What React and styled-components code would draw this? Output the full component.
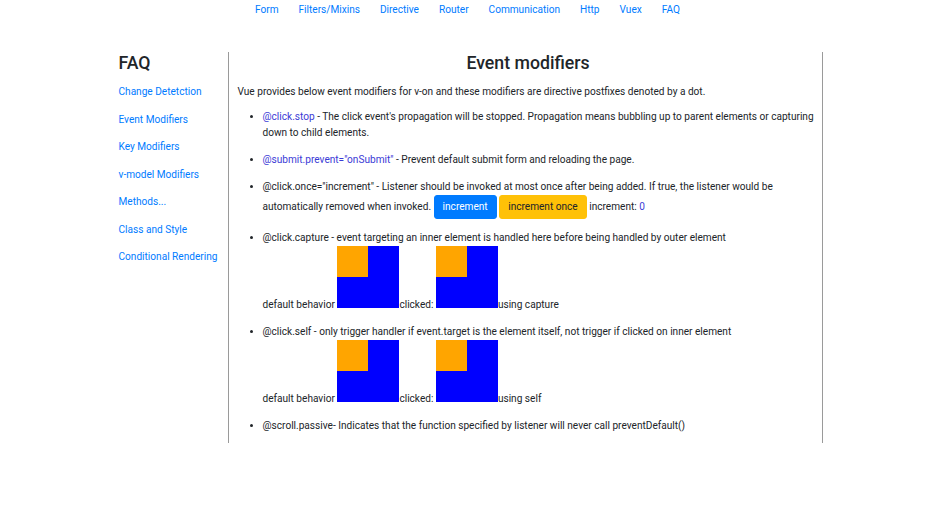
import styled, { createGlobalStyle } from "styled-components";

const TEXT_COLOR = "#212529";
const LINK_COLOR = "#007bff";
const CODE_COLOR = "#3b3bd6";
const RULE_COLOR = "#9a9a9a";

const GlobalStyle = createGlobalStyle`
  body {
    margin: 0;
    background: #fff;
    color: ${TEXT_COLOR};
    font-family: Roboto, "Noto Sans", sans-serif;
    font-size: 10.1px;
    line-height: 16px;
  }
`;

const TopNav = styled.nav`
  display: flex;
  justify-content: center;
  padding: 2px 0 0;
  height: 52px;
  box-sizing: border-box;
`;
const NavLink = styled.a`
  color: ${LINK_COLOR};
  text-decoration: none;
  padding: 0 10px;
`;

const Container = styled.div`
  width: 710px;
  margin: 0 auto;
  padding-left: 6px;
  box-sizing: border-box;
  display: flex;
  align-items: stretch;
`;

const Sidebar = styled.aside`
  width: 109px;
  flex-shrink: 0;
  border-right: 1px solid ${RULE_COLOR};
`;
const Heading = styled.h3`
  font-size: 17.7px;
  font-weight: 500;
  line-height: 22px;
  margin: 0 0 10px;
  text-align: ${(p) => (p.$center ? "center" : "left")};
`;
const SideLink = styled.a`
  display: block;
  color: ${LINK_COLOR};
  text-decoration: none;
  margin-bottom: 11.5px;
`;

const Main = styled.main`
  flex: 1;
  border-right: 1px solid ${RULE_COLOR};
  padding: 0 3px 9px 9px;
`;
const Intro = styled.p`
  margin: 0 0 9px;
`;
const List = styled.ul`
  margin: 0;
  padding-left: 25px;
`;
const Item = styled.li`
  margin-bottom: 11px;

  &:last-child {
    margin-bottom: 0;
  }
`;
const Code = styled.span`
  color: ${CODE_COLOR};
`;
const Button = styled.button`
  font: inherit;
  line-height: 16px;
  border: 1px solid ${(p) => (p.$warning ? "#ffc107" : "#007bff")};
  background: ${(p) => (p.$warning ? "#ffc107" : "#007bff")};
  color: ${(p) => (p.$warning ? TEXT_COLOR : "#fff")};
  padding: 3px 8px;
  border-radius: 3px;
  margin: 0;
  vertical-align: middle;
`;
const Outer = styled.span`
  display: inline-block;
  width: 62px;
  height: 62px;
  background: #0000ff;
  vertical-align: baseline;
`;
const Inner = styled.span`
  display: block;
  width: 31px;
  height: 31px;
  background: #ffa500;
`;

const Boxes = () => (
  <Outer>
    <Inner />
  </Outer>
);

const navItems = ["Form", "Filters/Mixins", "Directive", "Router", "Communication", "Http", "Vuex", "FAQ"];
const sideItems = [
  "Change Detetction",
  "Event Modifiers",
  "Key Modifiers",
  "v-model Modifiers",
  "Methods...",
  "Class and Style",
  "Conditional Rendering",
];

export default function App() {
  return (
    <>
      <GlobalStyle />
      <TopNav>
        {navItems.map((n) => (
          <NavLink key={n} href="#">{n}</NavLink>
        ))}
      </TopNav>
      <Container>
        <Sidebar>
          <Heading>FAQ</Heading>
          {sideItems.map((s) => (
            <SideLink key={s} href="#">{s}</SideLink>
          ))}
        </Sidebar>
        <Main>
          <Heading $center>Event modifiers</Heading>
          <Intro>
            Vue provides below event modifiers for v-on and these modifiers are directive postfixes denoted by a dot.
          </Intro>
          <List>
            <Item>
              <Code>@click.stop</Code> - The click event's propagation will be stopped. Propagation means bubbling up to
              parent elements or capturing down to child elements.
            </Item>
            <Item>
              <Code>@submit.prevent="onSubmit"</Code> - Prevent default submit form and reloading the page.
            </Item>
            <Item>
              @click.once="increment" - Listener should be invoked at most once after being added. If true, the listener
              would be automatically removed when invoked. <Button>increment</Button>{" "}
              <Button $warning>increment once</Button> increment: <Code>0</Code>
            </Item>
            <Item>
              @click.capture - event targeting an inner element is handled here before being handled by outer element
              <br />
              default behavior <Boxes />clicked: <Boxes />using capture
            </Item>
            <Item>
              @click.self - only trigger handler if event.target is the element itself, not trigger if clicked on inner
              element
              <br />
              default behavior <Boxes />clicked: <Boxes />using self
            </Item>
            <Item>
              @scroll.passive- Indicates that the function specified by listener will never call preventDefault()
            </Item>
          </List>
        </Main>
      </Container>
    </>
  );
}
